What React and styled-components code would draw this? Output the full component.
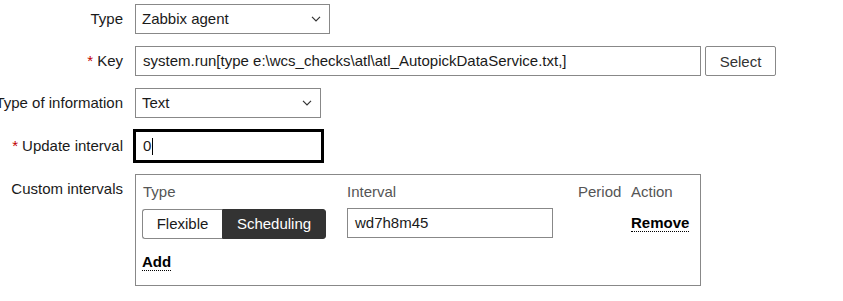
import React from "react";
import styled, { createGlobalStyle } from "styled-components";

const Global = createGlobalStyle`
  html, body { margin: 0; padding: 0; background: #fff; }
  body { font-family: Arial, "Liberation Sans", sans-serif; font-size: 15px; color: #1a1a1a; }
`;

const Form = styled.div`
  display: grid;
  grid-template-columns: 123px 1fr;
  column-gap: 12px;
  row-gap: 12px;
  padding-top: 4px;
  width: 843px;
`;

const Label = styled.div`
  display: flex;
  justify-content: flex-end;
  white-space: nowrap;
  line-height: 30px;
  height: 30px;
  margin-top: ${(p) => p.$mt || 0}px;
`;

const Star = styled.span`
  color: #c00000;
  margin-right: 4px;
`;

const Field = styled.div`
  display: flex;
  align-items: flex-start;
  gap: 4px;
  margin-top: ${(p) => p.$mt || 0}px;
`;

const SelectBox = styled.div`
  box-sizing: border-box;
  width: ${(p) => p.$w}px;
  height: 30px;
  border: 1px solid #888;
  display: flex;
  align-items: center;
  justify-content: space-between;
  padding: 0 8px 0 6px;
  line-height: 28px;
`;

const TextBox = styled.div`
  box-sizing: border-box;
  width: ${(p) => p.$w}px;
  height: 30px;
  border: 1px solid ${(p) => (p.$focus ? "#000" : "#888")};
  box-shadow: ${(p) => (p.$focus ? "0 0 0 2px #000" : "none")};
  padding: 0 7px;
  line-height: 28px;
  white-space: nowrap;
  overflow: hidden;
  display: flex;
  align-items: center;
`;

const Caret = styled.span`
  display: inline-block;
  width: 1px;
  height: 17px;
  background: #000;
  margin-left: 1px;
`;

const Button = styled.div`
  box-sizing: border-box;
  width: 71px;
  height: 30px;
  border: 1px solid #888;
  border-radius: 2px;
  display: flex;
  align-items: center;
  justify-content: center;
  color: #333;
`;

const IntervalsBox = styled.div`
  box-sizing: border-box;
  width: 566px;
  border: 1px solid #888;
  padding: 8px 6px 14px 6px;
  margin-top: ${(p) => p.$mt || 0}px;
  display: grid;
  grid-template-columns: 205px 231px 53px auto;
  grid-template-rows: 18px 30px 26px;
  row-gap: 7px;
  align-items: center;
`;

const Head = styled.div`
  color: #555;
  line-height: 18px;
  padding-left: ${(p) => p.$pl || 0}px;
`;

const Segmented = styled.div`
  display: flex;
  width: 184px;
  height: 30px;
  margin-top: 1px;
`;

const Segment = styled.div`
  box-sizing: border-box;
  width: ${(p) => p.$w}px;
  height: 30px;
  display: flex;
  align-items: center;
  justify-content: center;
  border: 1px solid ${(p) => (p.$active ? "#333" : "#888")};
  background: ${(p) => (p.$active ? "#333" : "#fff")};
  color: ${(p) => (p.$active ? "#fff" : "#1a1a1a")};
  border-radius: ${(p) => (p.$first ? "3px 0 0 3px" : "0 3px 3px 0")};
  border-right-width: ${(p) => (p.$first ? 0 : 1)}px;
`;

const LinkText = styled.span`
  font-weight: bold;
  color: #000;
  line-height: 16px;
  border-bottom: 1px dotted #000;
  justify-self: start;
  align-self: ${(p) => (p.$end ? "end" : "center")};
  margin-top: ${(p) => p.$mt || 0}px;
`;

const Chevron = () => (
  <svg width="10" height="6" viewBox="0 0 10 6">
    <polyline points="1,0.8 5,4.8 9,0.8" fill="none" stroke="#333" strokeWidth="1.2" />
  </svg>
);

export default function App() {
  return (
    <>
      <Global />
      <Form>
        <Label>Type</Label>
        <Field>
          <SelectBox $w={195}>
            <span>Zabbix agent</span>
            <Chevron />
          </SelectBox>
        </Field>

        <Label>
          <Star>*</Star>Key
        </Label>
        <Field>
          <TextBox $w={566}>system.run[type e:\wcs_checks\atl\atl_AutopickDataService.txt,]</TextBox>
          <Button>Select</Button>
        </Field>

        <Label>Type of information</Label>
        <Field>
          <SelectBox $w={186}>
            <span>Text</span>
            <Chevron />
          </SelectBox>
        </Field>

        <Label $mt={1}>
          <Star>*</Star>Update interval
        </Label>
        <Field $mt={1}>
          <TextBox $w={187} $focus>
            0<Caret />
          </TextBox>
        </Field>

        <Label $mt={1}>Custom intervals</Label>
        <Field $mt={1}>
          <IntervalsBox>
            <Head $pl={1}>Type</Head>
            <Head>Interval</Head>
            <Head>Period</Head>
            <Head>Action</Head>

            <Segmented>
              <Segment $w={80} $first>Flexible</Segment>
              <Segment $w={104} $active>Scheduling</Segment>
            </Segmented>
            <TextBox $w={206}>wd7h8m45</TextBox>
            <div />
            <LinkText $mt={1}>Remove</LinkText>

            <LinkText $end>Add</LinkText>
          </IntervalsBox>
        </Field>
      </Form>
    </>
  );
}
